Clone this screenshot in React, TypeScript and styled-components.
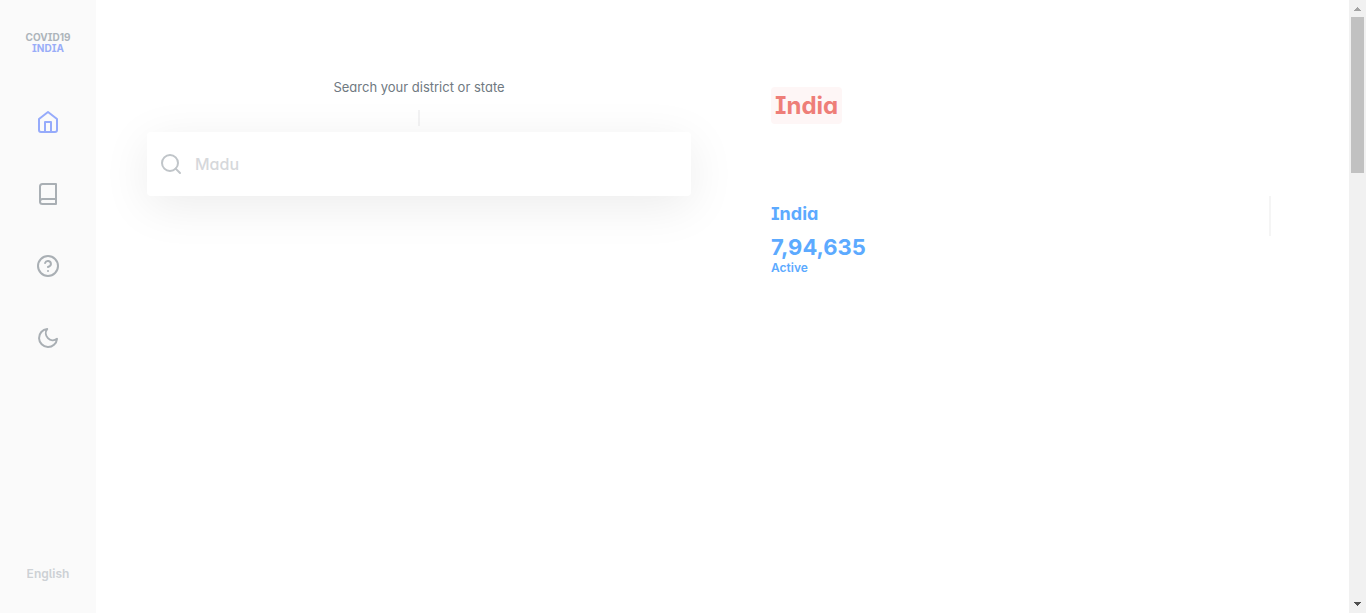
import React from "react";
import styled, { createGlobalStyle } from "styled-components";

const GlobalStyle = createGlobalStyle`
  * {
    box-sizing: border-box;
  }
  body {
    margin: 0;
    background: #fff;
    color: #6c757d;
    font-family: Inter, "Liberation Sans", sans-serif;
    font-feature-settings: "cv05", "cv08", "cv11";
  }
  input, select {
    font: inherit;
    font-feature-settings: inherit;
  }
`;

const Page = styled.div`
  display: flex;
  min-height: 100vh;
`;

const Sidebar = styled.nav`
  display: flex;
  flex-direction: column;
  align-items: center;
  flex: 0 0 96px;
  padding: 32px 0;
  background: #fafafa;
`;

const Logo = styled.a`
  display: flex;
  flex-direction: column;
  align-items: center;
  margin-bottom: 56px;
  color: #adb5bb;
  font-size: 10px;
  font-weight: 700;
  line-height: 11px;
  text-decoration: none;
`;

const LogoAccent = styled.span`
  color: #99adf8;
`;

const NavList = styled.div`
  display: flex;
  flex-direction: column;
  gap: 48px;
`;

const NavLink = styled.a<{ $active?: boolean }>`
  display: flex;
  color: ${(p) => (p.$active ? "#96abfb" : "#a9afb4")};
`;

const NavButton = styled.button`
  display: flex;
  padding: 0;
  border: 0;
  background: none;
  color: #a9afb4;
`;

const Language = styled.select`
  margin-top: auto;
  padding: 0;
  border: 0;
  appearance: none;
  background: none;
  color: #cdd1d5;
  font-size: 12px;
  font-weight: 600;
  line-height: 14px;
  text-align: center;
`;

const Main = styled.main`
  display: grid;
  flex: 1;
  grid-template-columns: 544fr 527fr;
  gap: 80px;
  align-items: start;
  padding: 80px 51px;
`;

const Search = styled.form`
  display: flex;
  flex-direction: column;
  align-items: center;
`;

const SearchLabel = styled.label`
  color: #6f7981;
  font-size: 13px;
  font-weight: 400;
  line-height: 14px;
`;

const Tick = styled.div`
  width: 2px;
  height: 16px;
  margin: 16px 0 6px;
  background: #f3f3f4;
`;

const SearchBox = styled.div`
  display: flex;
  align-items: center;
  gap: 12px;
  width: 100%;
  height: 64px;
  padding: 0 12px;
  border-radius: 4px;
  background: #fff;
  box-shadow: 0 10px 48px rgba(0, 0, 0, 0.08);
  color: #c0c5c9;
`;

const SearchInput = styled.input`
  flex: 1;
  min-width: 0;
  padding: 0;
  border: 0;
  outline: 0;
  background: none;
  font-size: 16px;
  font-weight: 500;

  &::placeholder {
    color: #d6d8db;
    opacity: 1;
  }
`;

const Overview = styled.section`
  display: flex;
  flex-direction: column;
  align-items: flex-start;
  padding: 7px 27px 0 0;
`;

const RegionTitle = styled.h1`
  margin: 0 0 72px;
  padding: 0 4px;
  border-radius: 4px;
  background: #fef6f6;
  color: #ee7e78;
  font-size: 24px;
  font-weight: 700;
  line-height: 37px;
`;

const MapHeader = styled.div`
  display: flex;
  justify-content: space-between;
  align-self: stretch;
  color: #5caaff;
`;

const MapTitle = styled.h2`
  margin: 8px 0 10px;
  font-size: 18px;
  font-weight: 700;
  line-height: 20px;
`;

const Total = styled.p`
  margin: 0;
  font-size: 22px;
  font-weight: 700;
  line-height: 27px;
`;

const Status = styled.p`
  margin: 0;
  font-size: 12px;
  font-weight: 600;
  line-height: 14px;
`;

const Divider = styled.div`
  width: 2px;
  height: 40px;
  background: #f5f5f5;
`;

const ScrollTrack = styled.div`
  display: flex;
  flex-direction: column;
  align-items: center;
  flex: 0 0 17px;
  background: #f1f1f1;
`;

const ScrollThumb = styled.div`
  width: 13px;
  height: 156px;
  margin-bottom: auto;
  background: #c1c1c1;
`;

const Icon = ({ children }: { children: React.ReactNode }) => (
  <svg
    width="24"
    height="24"
    viewBox="0 0 24 24"
    fill="none"
    stroke="currentColor"
    strokeWidth="2"
    strokeLinecap="round"
    strokeLinejoin="round"
    aria-hidden="true"
  >
    {children}
  </svg>
);

const Arrow = ({ down = false }: { down?: boolean }) => (
  <svg width="17" height="17" viewBox="0 0 17 17" shapeRendering="crispEdges" aria-hidden="true">
    {down ? (
      <path d="M5 6h7v1h-1v1h-1v1H9v1H8V9H7V8H6V7H5z" fill="#505050" />
    ) : (
      <path d="M5 11h7v-1h-1V9h-1V8H9V7H8v1H7v1H6v1H5z" fill="#a3a3a3" />
    )}
  </svg>
);

export default function App() {
  return (
    <>
      <GlobalStyle />
      <Page>
        <Sidebar>
          <Logo href="#">
            <span>COVID19</span>
            <LogoAccent>INDIA</LogoAccent>
          </Logo>
          <NavList>
            <NavLink href="#" $active aria-label="Home">
              <Icon>
                <path d="M3 9l9-7 9 7v11a2 2 0 0 1-2 2H5a2 2 0 0 1-2-2z" />
                <path d="M9 22V12h6v10" />
              </Icon>
            </NavLink>
            <NavLink href="#blog" aria-label="Blog">
              <Icon>
                <path d="M4 19.5A2.5 2.5 0 0 1 6.5 17H20" />
                <path d="M6.5 2H20v20H6.5A2.5 2.5 0 0 1 4 19.5v-15A2.5 2.5 0 0 1 6.5 2z" />
              </Icon>
            </NavLink>
            <NavLink href="#about" aria-label="About">
              <Icon>
                <circle cx="12" cy="12" r="10" />
                <path d="M9.09 9a3 3 0 0 1 5.83 1c0 2-3 3-3 3" />
                <path d="M12 17h.01" />
              </Icon>
            </NavLink>
            <NavButton type="button" aria-label="Dark mode">
              <Icon>
                <path d="M21 12.79A9 9 0 1 1 11.21 3 7 7 0 0 0 21 12.79z" />
              </Icon>
            </NavButton>
          </NavList>
          <Language aria-label="Language" defaultValue="en">
            <option value="en">English</option>
          </Language>
        </Sidebar>
        <Main>
          <Search>
            <SearchLabel htmlFor="search">Search your district or state</SearchLabel>
            <Tick />
            <SearchBox>
              <Icon>
                <circle cx="11" cy="11" r="8" />
                <path d="M21 21l-4.35-4.35" />
              </Icon>
              <SearchInput id="search" type="text" placeholder="Madu" />
            </SearchBox>
          </Search>
          <Overview>
            <RegionTitle>India</RegionTitle>
            <MapHeader>
              <div>
                <MapTitle>India</MapTitle>
                <Total>7,94,635</Total>
                <Status>Active</Status>
              </div>
              <Divider />
            </MapHeader>
          </Overview>
        </Main>
        <ScrollTrack aria-hidden="true">
          <Arrow />
          <ScrollThumb />
          <Arrow down />
        </ScrollTrack>
      </Page>
    </>
  );
}
